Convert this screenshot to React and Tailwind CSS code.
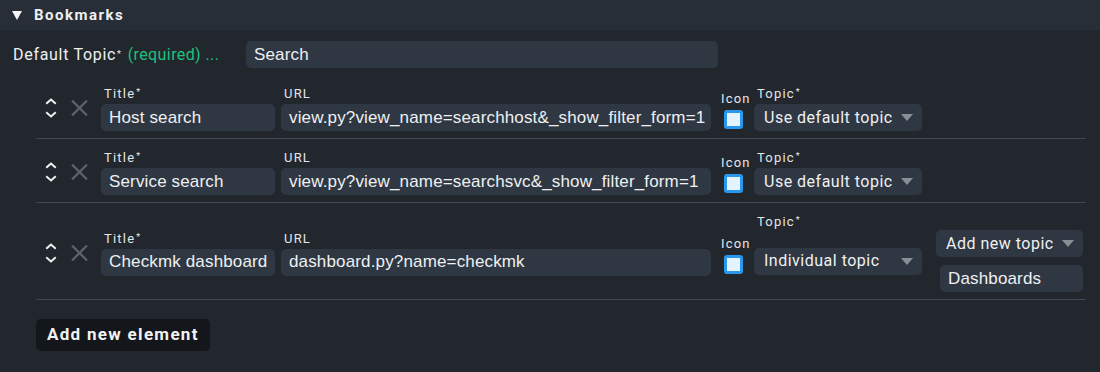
import React from 'react';

const font = { fontFamily: 'Roboto, "Noto Sans", sans-serif' };
const inputFont = { fontFamily: '"Liberation Sans", Arial, sans-serif' };

// small caret shown on the right of select boxes
const Caret = () => (
  <svg width="12" height="7" viewBox="0 0 12 7" className="shrink-0">
    <path d="M0 0 L12 0 L6 7 Z" fill="#8a8f96" />
  </svg>
);

const Star = () => <sup className="text-[9px] ml-[1px] relative -top-[3px]">*</sup>;

const Label = ({ children, star, className = 'pl-[3px]' }) => (
  <div className={`text-[13px] leading-[17px] tracking-[1.2px] text-[#e4e6ea] mb-[2px] whitespace-nowrap ${className}`}>
    {children}
    {star && <Star />}
  </div>
);

const TextBox = ({ value, width }) => (
  <div
    className="h-[27px] rounded-[5px] bg-[#2f3743] text-[#eef0f2] text-[17px] tracking-[0.15px] flex items-center px-[8px] whitespace-nowrap overflow-hidden"
    style={{ width, ...inputFont }}
  >
    {value}
  </div>
);

const Select = ({ value, width }) => (
  <div
    className="h-[27px] rounded-[5px] bg-[#2f3743] text-[#eef0f2] text-[16px] tracking-[0.5px] flex items-center justify-between pl-[10px] pr-[9px] whitespace-nowrap"
    style={{ width }}
  >
    <span>{value}</span>
    <Caret />
  </div>
);

const Checkbox = () => (
  <div className="w-[19px] h-[19px] rounded-[3px] border-[3px] border-[#2b98f0] bg-[#e4f3ff]" />
);

const MoveIcon = () => (
  <svg width="12" height="22" viewBox="0 0 12 22" fill="none" stroke="#f2f2f2" strokeWidth="2" strokeLinecap="square">
    <path d="M2 6 L6 2.5 L10 6" />
    <path d="M2 16 L6 19.5 L10 16" />
  </svg>
);

const DelIcon = () => (
  <svg width="17" height="16" viewBox="0 0 17 16" stroke="#5d636b" strokeWidth="2.2">
    <path d="M1 0.5 L16 15.5 M16 0.5 L1 15.5" />
  </svg>
);

const rows = [
  { title: 'Host search', url: 'view.py?view_name=searchhost&_show_filter_form=1', topic: 'Use default topic' },
  { title: 'Service search', url: 'view.py?view_name=searchsvc&_show_filter_form=1', topic: 'Use default topic' },
  { title: 'Checkmk dashboard', url: 'dashboard.py?name=checkmk', topic: 'Individual topic', extra: true },
];

const Row = ({ row }) => (
  <div className="flex items-center border-b border-[#45474a] pt-[10px] pb-[7px]">
    <div className="flex items-center w-[65px] pl-[9px] gap-[14px]">
      <MoveIcon />
      <DelIcon />
    </div>
    <div className="flex items-center gap-[6px]">
      <div>
        <Label star>Title</Label>
        <TextBox value={row.title} width={174} />
      </div>
      <div>
        <Label>URL</Label>
        <TextBox value={row.url} width={430} />
      </div>
      <div className="w-[31px] pt-[3px]">
        <Label className="pl-[4px]">Icon</Label>
        <div className="mt-[3px] ml-[7px]">
          <Checkbox />
        </div>
      </div>
      <div>
        <Label star>Topic</Label>
        {row.extra ? (
          <div className="flex items-center gap-[14px] -mt-[2px]">
            <Select value={row.topic} width={168} />
            <div className="flex flex-col items-end gap-[8px]">
              <Select value="Add new topic" width={147} />
              <TextBox value="Dashboards" width={143} />
            </div>
          </div>
        ) : (
          <Select value={row.topic} width={168} />
        )}
      </div>
    </div>
  </div>
);

export default function App() {
  return (
    <div className="w-[1100px] h-[372px] bg-[#22272e] text-[#eef0f2] overflow-hidden" style={font}>
      <div className="h-[30px] bg-[#282e37] flex items-center pl-[12px] gap-[12px]">
        <svg width="10" height="9" viewBox="0 0 10 9">
          <path d="M0 0 L10 0 L5 9 Z" fill="#f4f4f4" />
        </svg>
        <span className="text-[15px] font-bold tracking-[1.5px]">Bookmarks</span>
      </div>

      <div className="flex items-center mt-[11px] h-[27px]">
        <div className="w-[246px] pl-[13px] text-[16px] tracking-[0.7px] whitespace-nowrap">
          Default Topic<Star />
          <span className="text-[#1ec27c] ml-[6px] tracking-[0.4px]">(required) ...</span>
        </div>
        <TextBox value="Search" width={472} />
      </div>

      <div className="ml-[36px] w-[1050px] mt-[7px]">
        {rows.map((r) => (
          <Row key={r.title} row={r} />
        ))}
        <button className="mt-[19px] h-[32px] px-[11px] rounded-[5px] bg-[#13171c] text-[#f2f2f2] text-[17px] font-bold tracking-[1.3px]">
          Add new element
        </button>
      </div>
    </div>
  );
}
